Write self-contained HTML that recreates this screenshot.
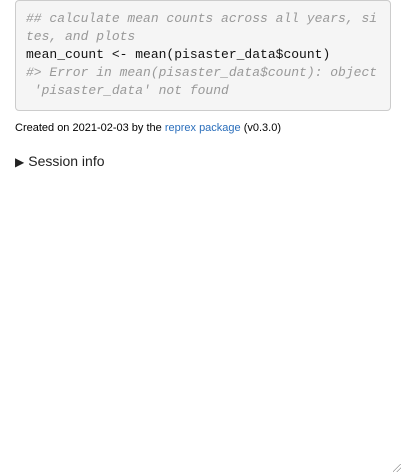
<!DOCTYPE html>
<html><head><style>
body{margin:0;width:404px;height:475px;background:#fff;position:relative;overflow:hidden;font-family:"Liberation Sans",sans-serif}
pre{position:absolute;left:15px;top:0;width:356px;margin:0;padding:9px 8px 10px 10px;background:#f5f5f5;border:1px solid #ccc;border-radius:4px;font:13px/18px "Liberation Mono",monospace;color:#111;white-space:pre}
.c{color:#999;font-style:italic}
.cr{position:absolute;left:15px;top:122px;font-size:11px;color:#000}
.cr a{color:#2a6ebb;text-decoration:none}
.s{position:absolute;left:15px;top:153px;font-size:14px;color:#222}
.h{position:absolute;right:3px;bottom:3px;width:8px;height:8px;background:linear-gradient(135deg,transparent 45%,#999 45%,#999 52%,transparent 52%,transparent 70%,#999 70%,#999 77%,transparent 77%)}
</style></head><body>
<pre><span class="c">## calculate mean counts across all years, si
tes, and plots</span>
mean_count &lt;- mean(pisaster_data$count)
<span class="c">#&gt; Error in mean(pisaster_data$count): object
 'pisaster_data' not found</span></pre>
<div class="cr">Created on 2021-02-03 by the <a>reprex package</a> (v0.3.0)</div>
<div class="s"><span style="font-size:12px;margin-right:4px">&#9654;</span>Session info</div>
<div class="h"></div>
</body></html>
